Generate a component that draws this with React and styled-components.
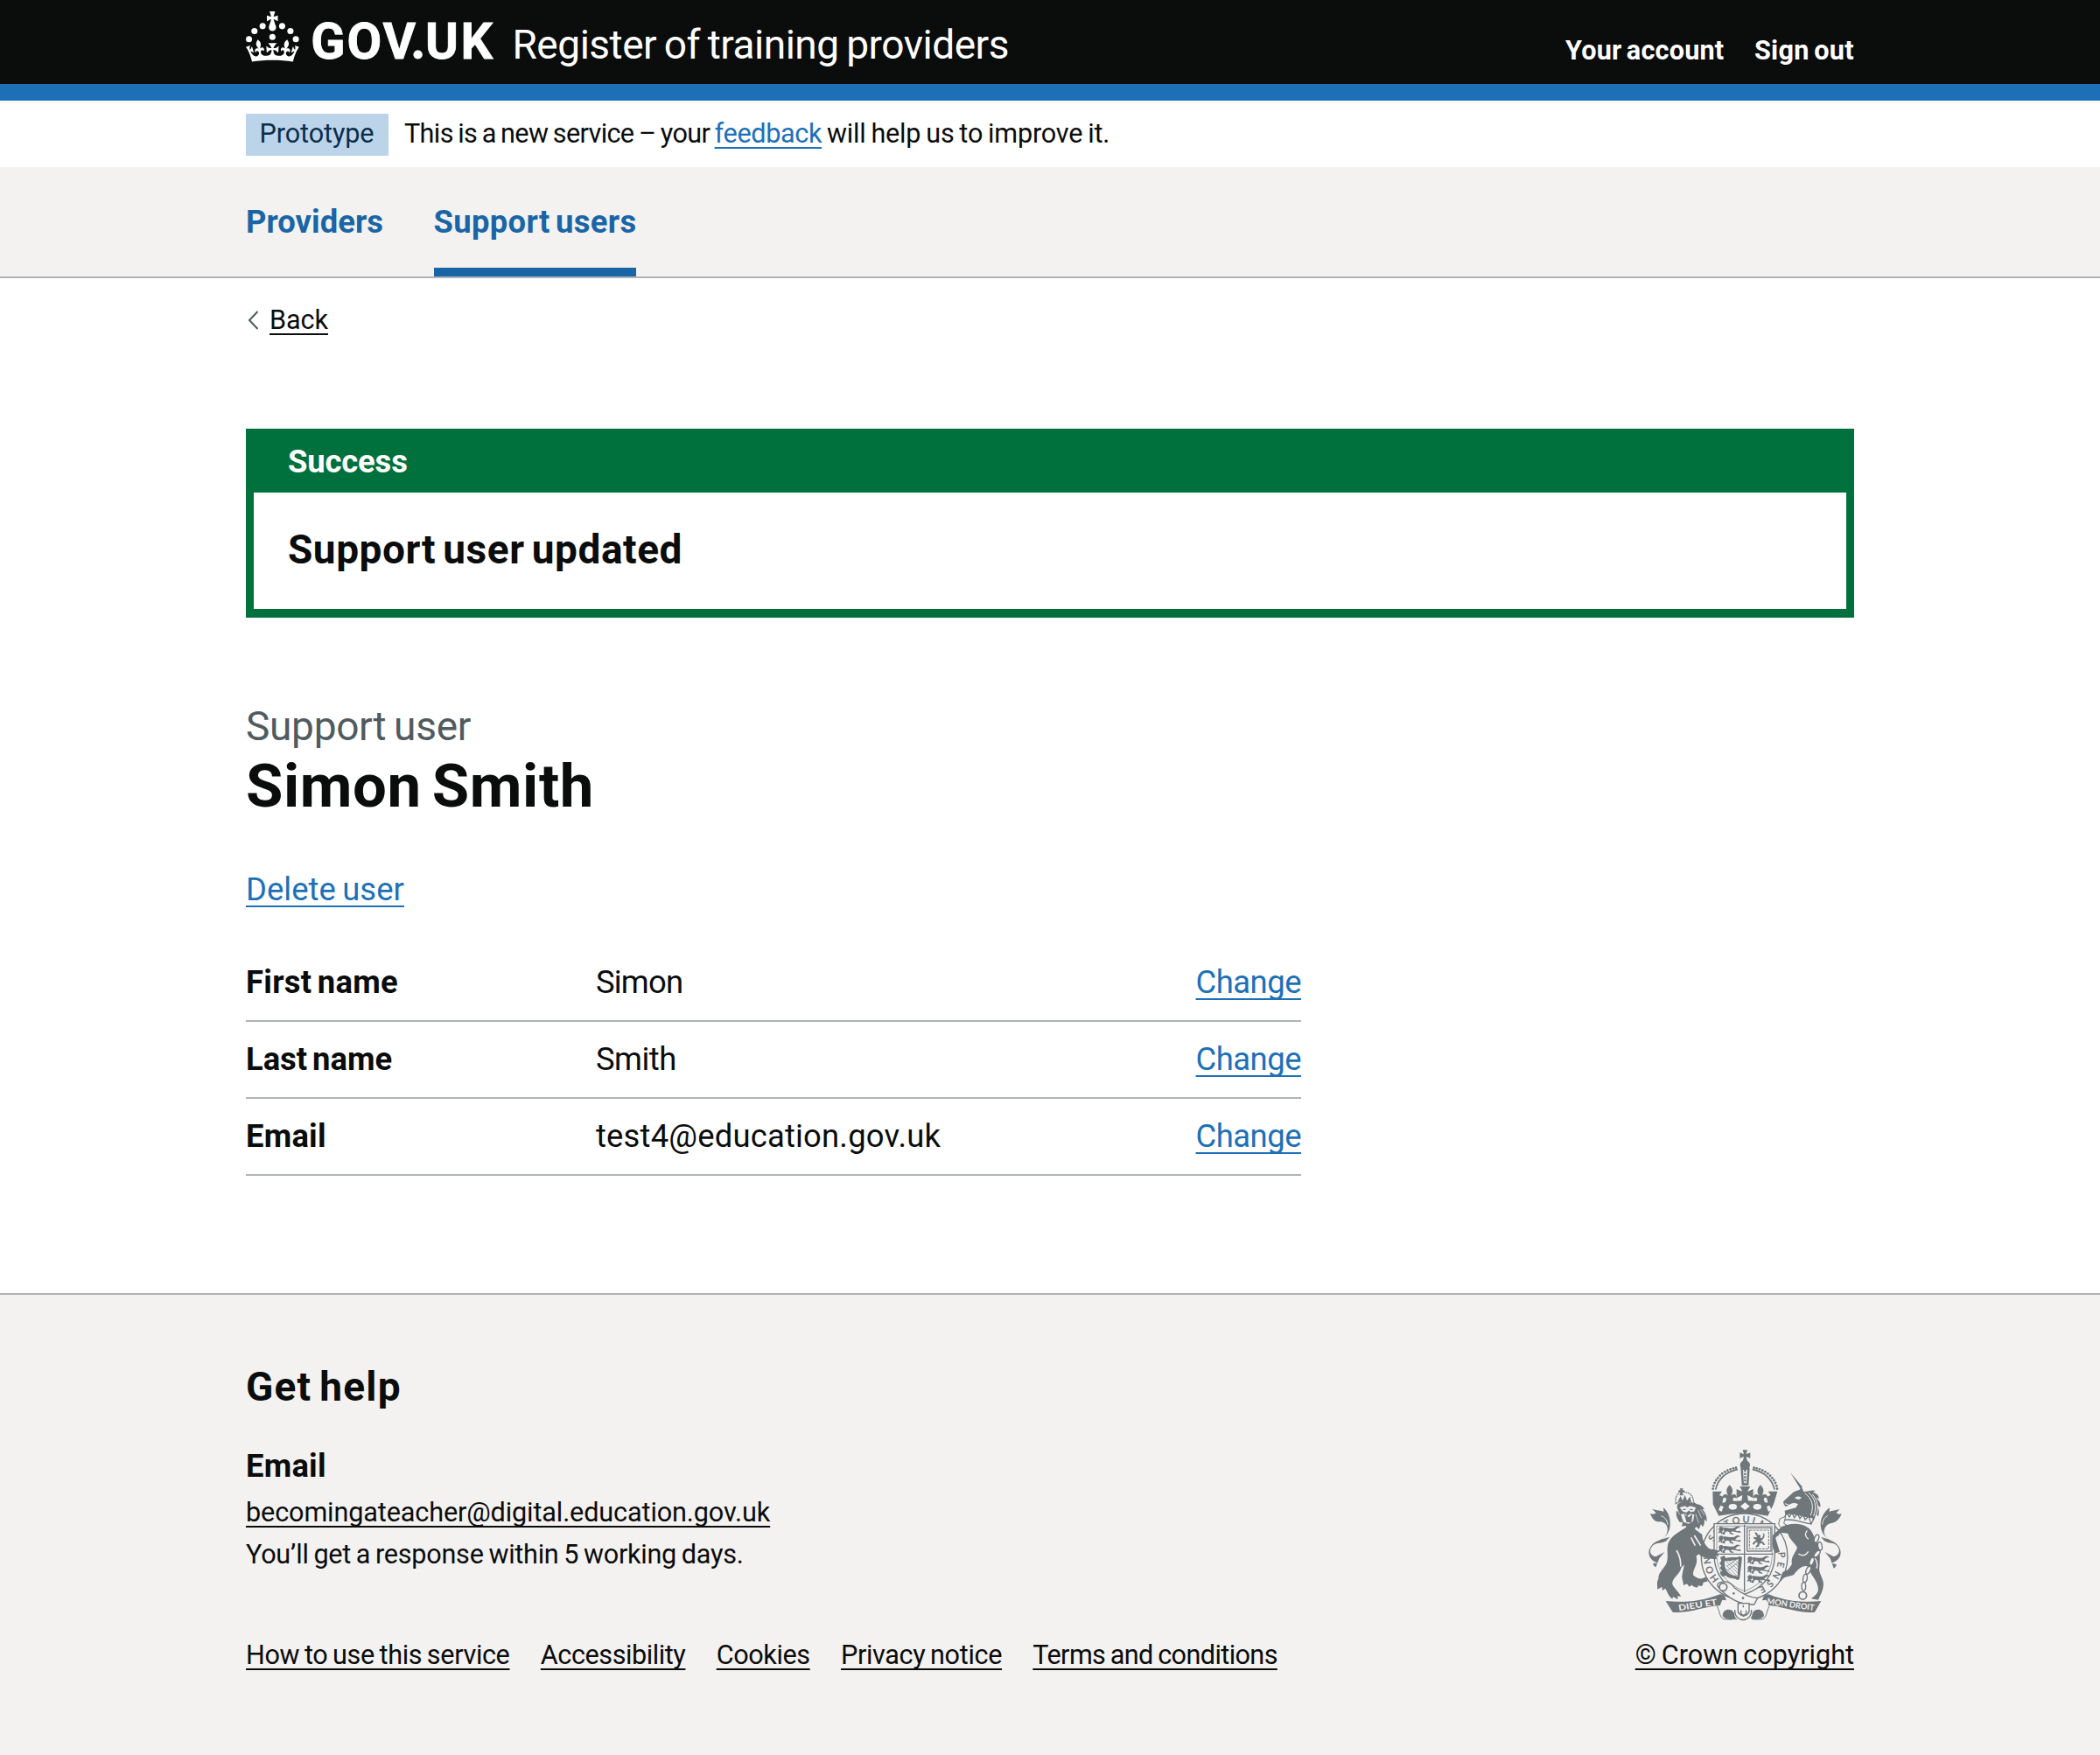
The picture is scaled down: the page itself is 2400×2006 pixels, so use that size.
import React from "react";
import styled, { createGlobalStyle } from "styled-components";

const color = {
  ink: "#0b0c0c",
  brand: "#1d70b8",
  nav: "#1a65a6",
  success: "#00703c",
  surface: "#f3f2f1",
  border: "#b1b4b6",
  secondary: "#505a5f",
  emblem: "#6f777b",
};

const GlobalStyle = createGlobalStyle`
  *, *::before, *::after { box-sizing: border-box; }
  body {
    margin: 0;
    background: #fff;
    color: ${color.ink};
    font-family: Roboto, "Liberation Sans", sans-serif;
    font-size: 36.4px;
    -webkit-font-smoothing: antialiased;
  }
  h1, h2, h3, p, dl, dt, dd, ul { margin: 0; padding: 0; font: inherit; }
  h1, h2, h3, p, dt, dd, li { display: flex; }
  ul { list-style: none; }
`;

const Container = styled.div`
  width: 1838px;
  margin: 0 auto;
`;

/* Text run: size, weight and tracking */
const Text = styled.span`
  font-size: ${(p) => p.$size || 36.4}px;
  font-weight: ${(p) => (p.$bold ? 700 : 400)};
  letter-spacing: ${(p) => p.$track || 0}px;
  word-spacing: ${(p) => (p.$bold ? -0.08 : -0.05)}em;
  white-space: pre;
`;

const Link = styled(Text).attrs({ as: "a", href: "#" })`
  color: ${(p) => p.$color || color.brand};
  text-decoration: underline;
  text-decoration-thickness: 2px;
  text-underline-offset: ${(p) => p.$offset || 6}px;
  text-decoration-skip-ink: none;
`;

const PlainLink = styled(Link)`
  text-decoration: none;
`;

const Header = styled.header`
  height: 115px;
  background: ${color.ink};
  border-bottom: 19px solid ${color.brand};
  color: #fff;
`;

const HeaderRow = styled(Container)`
  display: flex;
  align-items: flex-start;
`;

const Logo = styled.svg`
  display: block;
  width: 290px;
  height: 62px;
  margin-top: 13px;
  overflow: visible;
`;

const ServiceName = styled.div`
  display: flex;
  padding-top: 26px;
  margin-left: 14.5px;
  line-height: 50px;
`;

const Account = styled.nav`
  display: flex;
  gap: 34.5px;
  margin-left: auto;
  padding-top: 40px;
  line-height: 35px;
`;

const PhaseBanner = styled(Container)`
  display: flex;
  height: 76px;
  padding-top: 15px;
  line-height: 46px;
`;

const Tag = styled.strong`
  display: flex;
  width: 163px;
  height: 48px;
  margin-right: 18px;
  padding-left: 15.5px;
  background: #bbd4ea;
  color: #0c2d4a;
  font-weight: 400;
`;

const Navigation = styled.nav`
  background: ${color.surface};
  border-bottom: 2px solid ${color.border};
`;

const NavList = styled(Container)`
  display: flex;
  gap: 57.5px;
  height: 125px;
`;

const NavItem = styled.div`
  display: flex;
  padding-top: 43px;
  line-height: 40px;
  border-bottom: 10px solid ${(p) => (p.$current ? color.nav : "transparent")};
`;

const BackLink = styled.div`
  display: flex;
  align-items: center;
  margin-top: 30px;
  line-height: 36px;
`;

const Chevron = styled.svg`
  width: 14px;
  height: 24px;
  margin-right: 13px;
`;

const Notification = styled.section`
  margin-top: 106px;
  background: #fff;
  border: solid ${color.success};
  border-width: 0 9px 10px;
`;

const NotificationHeader = styled.h2`
  height: 73px;
  margin: 0 -9px;
  padding: 14px 48px 0;
  line-height: 48px;
  background: ${color.success};
  color: #fff;
`;

const NotificationBody = styled.div`
  display: flex;
  height: 133px;
  padding: 40px 39px 0;
  line-height: 50px;
`;

const Caption = styled.p`
  margin-top: 99px;
  line-height: 50px;
  color: ${color.secondary};
`;

const Title = styled.h1`
  margin-top: 7px;
  line-height: 74px;
`;

const Action = styled.p`
  margin-top: 57px;
  line-height: 48px;
`;

const SummaryList = styled.dl`
  width: 1206px;
  margin-top: 39px;
`;

const SummaryRow = styled.div`
  display: grid;
  grid-template-columns: 400px 1fr auto;
  height: 88px;
  padding-top: 19px;
  line-height: 48px;
  border-bottom: 2px solid ${color.border};
`;

const Footer = styled.footer`
  height: 528px;
  margin-top: 134px;
  padding-top: 80px;
  background: ${color.surface};
  border-top: 2px solid ${color.border};
`;

const FooterRow = styled(Container)`
  display: flex;
  justify-content: space-between;
  align-items: flex-end;
`;

const HelpTitle = styled.h2`
  line-height: 50px;
`;

const HelpSubtitle = styled.h3`
  margin-top: 46px;
  line-height: 40px;
`;

const HelpList = styled.ul`
  margin-top: 9px;
  line-height: 48px;
`;

const FooterLinks = styled.ul`
  display: flex;
  gap: 35.3px;
  margin-top: 70px;
  line-height: 41px;
`;

const Copyright = styled.div`
  display: flex;
  flex-direction: column;
  align-items: center;
  line-height: 41px;
`;

const Arms = styled.svg`
  display: block;
  width: 224px;
  height: 198px;
  margin: 0 0 17px 1px;
`;

function GovLogo() {
  return (
    <Logo viewBox="0 0 290 62" fill="#fff" role="img" aria-label="GOV.UK">
      <g transform="scale(.957)">
        <circle cx="20" cy="17.6" r="3.7" />
        <circle cx="10.2" cy="23.5" r="3.7" />
        <circle cx="3.7" cy="33.2" r="3.7" />
        <circle cx="31.7" cy="30.6" r="3.7" />
        <circle cx="43.3" cy="17.6" r="3.7" />
        <circle cx="53.2" cy="23.5" r="3.7" />
        <circle cx="59.7" cy="33.2" r="3.7" />
        <path d="M33.1,9.8c.2-.1.3-.3.5-.5l4.6,2.4v-6.8l-4.6,1.5c-.1-.2-.3-.3-.5-.5l1.9-5.9h-6.7l1.9,5.9c-.2.1-.3.3-.5.5l-4.6-1.5v6.8l4.6-2.4c.1.2.3.3.5.5l-2.6,8c-.9,2.8,1.2,5.7,4.1,5.7h0c3,0,5.1-2.9,4.1-5.7l-2.6-8ZM37,37.9s-3.4,3.8-4.1,6.1c2.2,0,4.2-.5,6.4-2.8l-.7,8.5c-2-2.8-4.4-4.1-5.7-3.8.1,3.1.5,6.7,5.8,7.2,3.7.3,6.7-1.5,7-3.8.4-2.6-2-4.3-3.7-1.6-1.4-4.5,2.4-6.1,4.9-3.2-1.9-4.5-1.8-7.7,2.4-10.9,3,4,2.6,7.3-1.2,11.1,2.4-1.3,6.2,0,4,4.6-1.2-2.8-3.7-2.2-4.2.2-.3,1.7.7,3.7,3,4.2,1.9.3,4.7-.9,7-5.9-1.3,0-2.4.7-3.9,1.7l2.4-8c.6,2.3,1.4,3.7,2.2,4.5.6-1.6.5-2.8,0-5.3l5,1.8c-2.6,3.6-5.2,8.7-7.3,17.5-7.4-1.1-15.7-1.7-24.5-1.7h0c-8.8,0-17.1.6-24.5,1.7-2.1-8.9-4.7-13.9-7.3-17.5l5-1.8c-.5,2.5-.6,3.7,0,5.3.8-.8,1.6-2.3,2.2-4.5l2.4,8c-1.5-1-2.6-1.7-3.9-1.7,2.3,5,5.2,6.2,7,5.9,2.3-.4,3.3-2.4,3-4.2-.5-2.4-3-3.1-4.2-.2-2.2-4.6,1.6-6,4-4.6-3.7-3.7-4.2-7.1-1.2-11.1,4.2,3.2,4.3,6.4,2.4,10.9,2.5-2.8,6.3-1.3,4.9,3.2-1.8-2.7-4.1-1-3.7,1.6.3,2.3,3.3,4.1,7,3.8,5.4-.5,5.7-4.2,5.8-7.2-1.3-.2-3.7,1-5.7,3.8l-.7-8.5c2.2,2.3,4.2,2.7,6.4,2.8-.7-2.3-4.1-6.1-4.1-6.1h10.6Z" />
      </g>
      <text y="53.6" fontFamily="Roboto, sans-serif" fontWeight="700" fontSize="57.6" stroke="#fff" strokeWidth=".8">
        <tspan x="74.2">G</tspan>
        <tspan x="115.6">O</tspan>
        <tspan x="156.5">V</tspan>
        <tspan x="189.8" fontFamily="Lato, sans-serif" fontWeight="900">.</tspan>
        <tspan x="205">U</tspan>
        <tspan x="245.5">K</tspan>
      </text>
    </Logo>
  );
}

/* A walking lion, used three to a quarter in the shield */
function PassantLion({ x, y }) {
  return (
    <g transform={`translate(${x} ${y})`}>
      <circle cx="10" cy="9" r="8" />
      <path d="M4 14l-4 10 8-3 4 6 3-9zM16 5c10-4 22 3 34 1 8-1 12-8 20-6l7 4-6 1c-6 0-8 5-13 9l9 3 8-2 3 7-9-1-14-3-8-1-4 4 8 3 2 5-13-3-2-7-10-2-6 6 2 5-10-1 1-6 6-4z" />
    </g>
  );
}

function Finial({ x, y }) {
  return (
    <path
      transform={`translate(${x} ${y})`}
      d="M-8-20H8L4-5 18-11V8L4 3l4 17H-8L-4 3-18 8V-11L-4-5z"
    />
  );
}

function FleurDeLis({ x, y }) {
  return (
    <path
      transform={`translate(${x} ${y})`}
      d="M0-30c12 12 13 22 5 37 9-10 23-3 18 11-3-6-10-6-12 1l5 14h-32l5-14c-2-7-9-7-12-1-5-14 9-21 18-11-8-15-7-25 5-37z"
    />
  );
}

const leftArch = [
  [327, 185], [329, 175], [333, 165], [338, 156], [344, 148], [351, 140],
  [359, 133], [368, 127], [377, 122], [387, 118], [397, 115], [406, 113],
];

/* word, distance along the garter, length */
const motto = [
  ["HONI", 97, 100],
  ["SOIT", 233, 85],
  ["QUI", 324, 74],
  ["MAL", 411, 80],
  ["PENSE", 530, 150],
];

const chain = [
  [682, 356, 20], [694, 382, -10], [684, 408, 40], [666, 434, 20],
  [654, 464, 25], [643, 492, 10], [638, 520, 0],
];

function RoyalArms() {
  const bg = color.surface;
  return (
    <Arms viewBox="100 48 672 594" fill={color.emblem} aria-hidden="true">
      {/* garter */}
      <circle cx="435" cy="418" r="148" fill={bg} stroke={color.emblem} strokeWidth="4" />
      <path id="motto" fill="none" d="M435 534A116 116 0 0 1 435 302A116 116 0 0 1 435 534" />
      <g fontFamily="Lato, sans-serif" fontSize="33" fontWeight="700">
        {motto.map(([word, start, length]) => (
          <text key={word}>
            <textPath href="#motto" startOffset={start} textLength={length}>{word}</textPath>
          </text>
        ))}
      </g>

      {/* shield */}
      <path d="M331 305h208v105c0 74-44 116-104 137-60-21-104-63-104-137z" fill={bg} stroke={color.emblem} strokeWidth="4" />
      <path d="M340 313h190v97c0 66-40 105-95 126-55-21-95-60-95-126z" fill="none" stroke={color.emblem} strokeWidth="2" />
      <path d="M435 308v232M336 409h198" stroke={color.emblem} strokeWidth="4" />
      <PassantLion x={345} y={314} />
      <PassantLion x={345} y={345} />
      <PassantLion x={345} y={377} />
      <PassantLion x={444} y={416} />
      <PassantLion x={444} y={448} />
      <PassantLion x={444} y={480} />
      <rect x="444" y="319" width="82" height="80" fill="none" stroke={color.emblem} strokeWidth="4" />
      <rect x="452" y="327" width="66" height="64" fill="none" stroke={color.emblem} strokeWidth="3" strokeDasharray="9 3" />
      <path d="M470 334l8 2 3 8 6-2 4 5-3 8 8-2 4-10-3-8 7 6-1 10-6 9-6 4 9 4 6 9-6 1-5-6-8 1-2 9-9 4-3-4 6-5 1-9-7 2-6 7-5-3 6-8 8-5-9-5-1-6 8 2 5-3-5-5z" />
      <path d="M352 420l14-6 5 9c14-6 36 0 48-6l8 3-3 26-6 50-9 2c-9-10-24-1-38-15l-11 4-10-12 8-9-8-9 6-8-7-9 7-7z" />
      <path d="M368 432c14 2 32-2 46-5l-3 60c-8-8-20-3-31-14-10-9-16-26-12-41z" fill={bg} />
      <path d="M372 434l40 40M382 433l30 30M393 432l20 20M370 445l40 40M371 458l22 23M403 429l11 11M376 450l28-20M378 464l34-25" stroke={color.emblem} strokeWidth="2" />

      {/* belt and buckle */}
      <path d="M350 507c30-10 42 5 50 17 22 17 50 34 80 36l-12 22c-50 1-88-20-120-57-8-8-8-14 2-18z" fill={bg} stroke={color.emblem} strokeWidth="4" />
      <circle cx="362" cy="522" r="13" fill={bg} stroke={color.emblem} strokeWidth="5" />
      <circle cx="398" cy="544" r="4" />
      <circle cx="430" cy="560" r="4" />
      <path d="M413 578h38v28c-4 12-10 12-19 16-9-4-15-4-19-16z" fill={bg} stroke={color.emblem} strokeWidth="4" />
      <path d="M423 602c-3 22 21 22 18 0M431 584v8" fill="none" stroke={color.emblem} strokeWidth="4" />
      <path d="M402 600c-2 46 58 46 57 0" fill="none" stroke={color.emblem} strokeWidth="4" />
      <path d="M360 622c0-28 32-28 40-10 0 8 3 12 6 17-15 6-32 8-46-7zM502 622c0-28-32-28-40-10 0 8-3 12-6 17 15 6 32 8 46-7z" />
      <path d="M341 588c10 16 8 46 30 45 20 0 30-2 38 0M520 588c-10 16-8 46-30 45-16 0-22-2-30 0" fill="none" stroke={color.emblem} strokeWidth="3" />

      {/* crown */}
      <path d="M326 194h32l-9 13 14 6-4 20q78-14 156 0l-4-20 14-6-9-13h32l-13 44-20 40c-56-12-112-12-168 0l-20-40z" />
      <FleurDeLis x={384} y={202} />
      <FleurDeLis x={490} y={202} />
      <path d="M419 177h36l-10 18 20-9v31l-20-10 4 27h-25l4-27-20 10v-31l20 9z" />
      <ellipse cx="395" cy="247" rx="14" ry="10" fill={bg} />
      <ellipse cx="479" cy="247" rx="14" ry="10" fill={bg} />
      <path d="M437 232l16 13-16 13-16-13zM353 242l10 4-6 18-11-6zM521 242l-10 4 6 18 11-6z" fill={bg} />
      <path d="M336 188c8-35 32-60 76-70M538 188c-8-35-32-60-76-70" fill="none" stroke={color.emblem} strokeWidth="5" />
      <path d="M422 114h31l-4 60h-23z" />
      <path d="M430 120h15l-3 48h-9z" fill={bg} />
      <path d="M437 120v50" stroke={color.emblem} strokeWidth="7" strokeDasharray="7 4" />
      <circle cx="437" cy="104" r="17" />
      <Finial x={437} y={72} />
      {leftArch.map(([x, y]) => (
        <React.Fragment key={x}>
          <circle cx={x} cy={y} r="4.2" />
          <circle cx={874 - x} cy={y} r="4.2" />
        </React.Fragment>
      ))}

      {/* lion */}
      <path d="M140 440c-34-8-42-40-22-62 14-18 44-14 52-44 6-22-8-34-24-36-18 2-28-10-34-28 10 4 14 2 20-2l-14-14c18 6 30 4 40 10l-1-14c22 18 26 48 22 68-4 24-18 32-26 40l26-8-12 14c-14 10-38 4-50 20-10 16-4 30 14 34l30-16-18 22-12 30c-6-4-10-8-9-14z" />
      <path d="M150 278c14 6 20 16 22 30" stroke={bg} strokeWidth="3" fill="none" />
      <path d="M247 310c-28 18-60 34-72 58-10 24 2 50-8 74-8 18-28 30-27 52-8 14-2 24-4 36l16-8 2 12 10-7c8 14 10 26 24 36l2-8 16 10 0-12 11 2c-4-14-20-24-29-42-4-20 26-34 30-56 8-14 36-26 60-48 14 14 34 16 62 18l-3-12 10 2-6-13 9-3c-14-12-28-6-38-12-12-12-22-28-22-47z" />
      <path d="M222 416c14 24 2 44 0 62-4 14 4 26 4 38l12-5 8 10 8-6c6 4 10 10 22 8l-1-6 14 2c8-8-4-14 20-16l-6-16c-22 14-34 2-44-6-2-22 20-36 10-66z" />
      <path d="M202 396c12 20 16 34 14 56M263 345l22 35M252 352l14 28" stroke={bg} strokeWidth="5" fill="none" />
      <path d="M206 238c18-14 48-14 66 0 14 2 20 8 26 18l-8-1c14 14 16 28 16 42l-9-7c2 12 0 20-6 26l-5-10-7 18-10-9-8 15-10-12-12 10-5-16-14 2 3-14-10-1c-8-10-14-22-11-38l8 3c-6-10-8-18-4-26z" />
      <path d="M214 250l17-5 8 5 10-5 18 5-5 12-12 2-5-7-7 8-13-2zM218 273l16-1 4 9 10-9 14 2-4 22-16 8-16-6zM206 262l8 12M276 258l12 28M268 272l10 30M284 256l14 20" fill={bg} stroke={bg} strokeWidth="2" />
      <path d="M224 256h10M248 256h10M232 276l12 10 10-10-2 22h-14z" stroke={color.emblem} strokeWidth="4" />
      <path d="M200 236c-4-28 8-40 25-40s36 8 36 40c-20-10-40-10-61 0z" fill={bg} stroke={color.emblem} strokeWidth="4" strokeDasharray="5 2" />
      <path d="M206 230l10-20 7 16 8-20 7 20 10-14 5 18zM213 184h12l-3 6h7v7h-7l4 11h-14l4-11h-7v-7h7z" />

      {/* unicorn */}
      <path d="M592 129l34 55 8-5z" />
      <path d="M630 177l8 18c18 0 30-8 40-3l-9 6c16 2 20 12 22 20l-10-2c12 12 16 20 14 32l-9-6c6 16 5 26 2 38l-9-8c-2 16-8 26-16 36l-6-16c-26-8-50-10-82-14l-2-18 38-10 8-12c-16-8-26-2-36 6l-8 2-5-8-2-8 3-4 33-30 20-8z" />
      <path d="M609 216c10-5 14-3 20 0-6 6-12 5-20 0zM574 236l14 5" fill={bg} stroke={bg} strokeWidth="3" />
      <path d="M642 200c22 18 34 40 20 76M655 198c22 20 30 48 17 80M668 204c20 24 22 46 12 76" stroke={bg} strokeWidth="3" fill="none" />
      <path d="M572 282c28-12 62 8 96 10" stroke={bg} strokeWidth="12" fill="none" />
      <path d="M572 284l8-16 9 14 9-15 8 17 11-14 8 17 11-13 7 17 12-12 6 18M572 292c30-6 60 10 94 14" stroke={color.emblem} strokeWidth="4" fill="none" />
      <path d="M556 288l20-8-6 24 10 6-20 8-8-12z" fill={bg} stroke={color.emblem} strokeWidth="3" />
      <path d="M560 318c28-16 66-18 92 0 18 12 20 32 32 52 12 28 10 60 8 84-4 20 14 38 14 60-2 22-10 34-18 52l-24-4c6-8 22-12 24-32-2-34-28-48-34-78-10-6-30-2-50 28-16 8-32 2-44 22l-6 2 12-34c16-2 24-12 32-28-6-24 14-38 18-56-12-20-26-26-32-48l-20-2c-12 4-22 8-22 20l14 46-14 4c-14-16-12-40-10-62z" />
      <path d="M620 408c12 8 24 8 34-8M650 328c-10 12-6 20 4 30M676 422c8 10 10 24 6 36" stroke={bg} strokeWidth="4" fill="none" />
      <path d="M732 440c34-8 42-40 22-62-14-18-42-14-46-44 0-18 12-30 28-32 14-2 26-14 32-32-8 4-12 2-18-2l12-14c-16 6-26 4-36 10l1-14c-26 18-34 48-30 68 4 24 18 32 24 40l-24-8 12 14c14 10 36 4 46 20 10 16 2 30-14 34l-30-16 18 22 12 34c6-4 10-8 9-14z" />
      <path d="M720 278c-12 6-18 18-18 30" stroke={bg} strokeWidth="3" fill="none" />
      {chain.map(([x, y, r]) => (
        <ellipse key={y} cx={x} cy={y} rx="7" ry="14" transform={`rotate(${r} ${x} ${y})`} fill={bg} stroke={color.emblem} strokeWidth="4" />
      ))}
      <circle cx="635" cy="551" r="13" fill="none" stroke={color.emblem} strokeWidth="5" />

      {/* ribbons */}
      <path d="M165 570c58 6 118 2 182-22 16-4 22 6 26 20l-14-2-8 20c-50 0-100 28-162 22z" />
      <path d="M698 570c-58 6-118 2-176-22-16-4-22 6-26 20l14-2 8 20c50 0 100 28 158 22z" />
      <g fill={bg} fontFamily="Lato, sans-serif" fontWeight="700">
        <text transform="translate(210 604) rotate(-9)" fontSize="29" textLength="134" lengthAdjust="spacingAndGlyphs">DIEU ET</text>
        <text transform="translate(511 580) rotate(8)" fontSize="28" textLength="164" lengthAdjust="spacingAndGlyphs">MON DROIT</text>
      </g>
    </Arms>
  );
}

const details = [
  { label: "First name", labelTrack: 0.29, value: "Simon", valueTrack: -0.8 },
  { label: "Last name", labelTrack: -0.04, value: "Smith", valueTrack: -0.5 },
  { label: "Email", labelTrack: 0.2, value: "test4@education.gov.uk", valueTrack: 0.2 },
];

const footerLinks = [
  ["How to use this service", -0.36],
  ["Accessibility", -0.43],
  ["Cookies", -0.4],
  ["Privacy notice", -0.35],
  ["Terms and conditions", -0.6],
];

export default function App() {
  return (
    <>
      <GlobalStyle />
      <Header>
        <HeaderRow>
          <GovLogo />
          <ServiceName>
            <Text $size={46} $track={-0.48}>Register of training providers</Text>
          </ServiceName>
          <Account>
            <PlainLink $size={30.6} $bold $track={0.2} $color="#fff">Your account</PlainLink>
            <PlainLink $size={30.6} $bold $track={0.33} $color="#fff">Sign out</PlainLink>
          </Account>
        </HeaderRow>
      </Header>

      <PhaseBanner>
        <Tag><Text $size={30.6} $track={-0.1}>Prototype</Text></Tag>
        <p>
          <Text $size={30.6} $track={-0.63}>{"This is a new service – your "}</Text>
          <Link $size={30.6} $track={-0.35} $offset={5}>feedback</Link>
          <Text $size={30.6} $track={-0.19}>{" will help us to improve it."}</Text>
        </p>
      </PhaseBanner>

      <Navigation>
        <NavList>
          <NavItem><PlainLink $bold $track={0.03} $color={color.nav}>Providers</PlainLink></NavItem>
          <NavItem $current><PlainLink $bold $track={0.33} $color={color.nav}>Support users</PlainLink></NavItem>
        </NavList>
      </Navigation>

      <Container as="main">
        <BackLink>
          <Chevron viewBox="0 0 14 24" fill="none" stroke={color.secondary} strokeWidth="2">
            <path d="M13.500 2L4 12l9.500 10" />
          </Chevron>
          <Link $size={30.6} $track={-0.06} $offset={5} $color={color.ink}>Back</Link>
        </BackLink>

        <Notification>
          <NotificationHeader><Text $bold $track={-0.15}>Success</Text></NotificationHeader>
          <NotificationBody><Text $size={46} $bold $track={0.53}>Support user updated</Text></NotificationBody>
        </Notification>

        <Caption><Text $size={46} $track={-0.29}>Support user</Text></Caption>
        <Title><Text $size={68.9} $bold $track={0.57}>Simon Smith</Text></Title>
        <Action><Link $track={0.07}>Delete user</Link></Action>

        <SummaryList>
          {details.map((d) => (
            <SummaryRow key={d.label}>
              <dt><Text $bold $track={d.labelTrack}>{d.label}</Text></dt>
              <dd><Text $track={d.valueTrack}>{d.value}</Text></dd>
              <dd><Link $track={-0.48}>Change</Link></dd>
            </SummaryRow>
          ))}
        </SummaryList>
      </Container>

      <Footer>
        <FooterRow>
          <div>
            <HelpTitle><Text $size={46} $bold $track={1.2}>Get help</Text></HelpTitle>
            <HelpSubtitle><Text $bold $track={0.2}>Email</Text></HelpSubtitle>
            <HelpList>
              <li><Link $size={30.6} $track={-0.12} $offset={5} $color={color.ink}>becomingateacher@digital.education.gov.uk</Link></li>
              <li><Text $size={30.6} $track={-0.26}>You’ll get a response within 5 working days.</Text></li>
            </HelpList>
            <FooterLinks>
              {footerLinks.map(([label, track]) => (
                <li key={label}><Link $size={30.6} $track={track} $offset={5} $color={color.ink}>{label}</Link></li>
              ))}
            </FooterLinks>
          </div>
          <Copyright>
            <RoyalArms />
            <Link $size={30.6} $offset={5} $color={color.ink}>© Crown copyright</Link>
          </Copyright>
        </FooterRow>
      </Footer>
    </>
  );
}
